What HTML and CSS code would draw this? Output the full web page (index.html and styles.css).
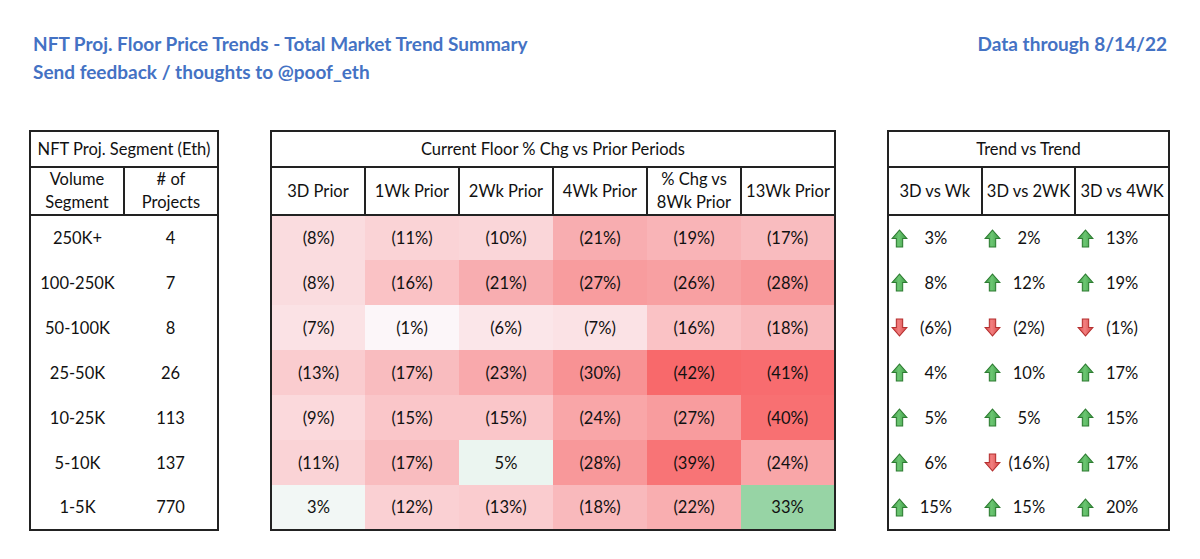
FILE: index.html
```html
<!DOCTYPE html>
<html lang="en">
<head>
<meta charset="utf-8">
<title>NFT Proj. Floor Price Trends</title>
<link rel="stylesheet" href="styles.css">
</head>
<body>
<div class="defs">
  <svg width="0" height="0" aria-hidden="true">
    <defs>
      <linearGradient id="gUp" x1="0" y1="0" x2="1" y2="0">
        <stop offset="0" stop-color="#3f9b47"/>
        <stop offset="0.45" stop-color="#6cc672"/>
        <stop offset="1" stop-color="#3c9a45"/>
      </linearGradient>
      <linearGradient id="gDn" x1="0" y1="0" x2="1" y2="0">
        <stop offset="0" stop-color="#d94a4a"/>
        <stop offset="0.45" stop-color="#f27f7f"/>
        <stop offset="1" stop-color="#d54545"/>
      </linearGradient>
    </defs>
  </svg>
</div>
<div class="page">
  <header class="top">
    <div class="titles">
      <div>NFT Proj. Floor Price Trends - Total Market Trend Summary</div>
      <div>Send feedback / thoughts to @poof_eth</div>
    </div>
    <div class="date">Data through 8/14/22</div>
  </header>

  <main class="tables">
    <table class="t t-seg">
      <colgroup><col class="c95"><col class="c95"></colgroup>
      <thead>
        <tr class="h1"><th colspan="2">NFT Proj. Segment (Eth)</th></tr>
        <tr class="h2"><th>Volume<br>Segment</th><th># of<br>Projects</th></tr>
      </thead>
      <tbody>
        <tr><td>250K+</td><td>4</td></tr>
        <tr><td>100-250K</td><td>7</td></tr>
        <tr><td>50-100K</td><td>8</td></tr>
        <tr><td>25-50K</td><td>26</td></tr>
        <tr><td>10-25K</td><td>113</td></tr>
        <tr><td>5-10K</td><td>137</td></tr>
        <tr><td>1-5K</td><td>770</td></tr>
      </tbody>
    </table>

    <table class="t t-chg">
      <thead>
        <tr class="h1"><th colspan="6">Current Floor % Chg vs Prior Periods</th></tr>
        <tr class="h2"><th>3D Prior</th><th>1Wk Prior</th><th>2Wk Prior</th><th>4Wk Prior</th><th>% Chg vs<br>8Wk Prior</th><th>13Wk Prior</th></tr>
      </thead>
      <tbody>
        <tr>
          <td style="background:#FADCDF">(8%)</td><td style="background:#FAD3D6">(11%)</td><td style="background:#FAD6D9">(10%)</td><td style="background:#F8ADB0">(21%)</td><td style="background:#F9B4B7">(19%)</td><td style="background:#F9BCBF">(17%)</td>
        </tr>
        <tr>
          <td style="background:#FADCDF">(8%)</td><td style="background:#FAC2C5">(16%)</td><td style="background:#F8ADB0">(21%)</td><td style="background:#F89C9E">(27%)</td><td style="background:#F8A0A2">(26%)</td><td style="background:#F8989A">(28%)</td>
        </tr>
        <tr>
          <td style="background:#FBE2E5">(7%)</td><td style="background:#FCF6F9">(1%)</td><td style="background:#FBE6E9">(6%)</td><td style="background:#FBE2E5">(7%)</td><td style="background:#FAC2C5">(16%)</td><td style="background:#F9B9BC">(18%)</td>
        </tr>
        <tr>
          <td style="background:#FACCCF">(13%)</td><td style="background:#F9BCBF">(17%)</td><td style="background:#F9A9AC">(23%)</td><td style="background:#F89294">(30%)</td><td style="background:#F8696B">(42%)</td><td style="background:#F86C6F">(41%)</td>
        </tr>
        <tr>
          <td style="background:#FBD9DC">(9%)</td><td style="background:#FAC6C9">(15%)</td><td style="background:#FAC6C9">(15%)</td><td style="background:#F9A6A8">(24%)</td><td style="background:#F89C9E">(27%)</td><td style="background:#F87072">(40%)</td>
        </tr>
        <tr>
          <td style="background:#FAD3D6">(11%)</td><td style="background:#F9BCBF">(17%)</td><td style="background:#EBF5F0">5%</td><td style="background:#F8989A">(28%)</td><td style="background:#F87476">(39%)</td><td style="background:#F9A6A8">(24%)</td>
        </tr>
        <tr>
          <td style="background:#F2F7F5">3%</td><td style="background:#FAD0D3">(12%)</td><td style="background:#FACCCF">(13%)</td><td style="background:#F9B9BC">(18%)</td><td style="background:#F9AEB0">(22%)</td><td style="background:#97D4A5">33%</td>
        </tr>
      </tbody>
    </table>

    <table class="t t-trend">
      <thead>
        <tr class="h1"><th colspan="3">Trend vs Trend</th></tr>
        <tr class="h2"><th>3D vs Wk</th><th>3D vs 2WK</th><th>3D vs 4WK</th></tr>
      </thead>
      <tbody>
        <tr>
          <td><div class="tv"><svg class="ar" viewBox="0 0 16 18"><path class="up" d="M8 1 L15 9 L11 9 L11 17 L5 17 L5 9 L1 9 Z"/></svg><span>3%</span></div></td>
          <td><div class="tv"><svg class="ar" viewBox="0 0 16 18"><path class="up" d="M8 1 L15 9 L11 9 L11 17 L5 17 L5 9 L1 9 Z"/></svg><span>2%</span></div></td>
          <td><div class="tv"><svg class="ar" viewBox="0 0 16 18"><path class="up" d="M8 1 L15 9 L11 9 L11 17 L5 17 L5 9 L1 9 Z"/></svg><span>13%</span></div></td>
        </tr>
        <tr>
          <td><div class="tv"><svg class="ar" viewBox="0 0 16 18"><path class="up" d="M8 1 L15 9 L11 9 L11 17 L5 17 L5 9 L1 9 Z"/></svg><span>8%</span></div></td>
          <td><div class="tv"><svg class="ar" viewBox="0 0 16 18"><path class="up" d="M8 1 L15 9 L11 9 L11 17 L5 17 L5 9 L1 9 Z"/></svg><span>12%</span></div></td>
          <td><div class="tv"><svg class="ar" viewBox="0 0 16 18"><path class="up" d="M8 1 L15 9 L11 9 L11 17 L5 17 L5 9 L1 9 Z"/></svg><span>19%</span></div></td>
        </tr>
        <tr>
          <td><div class="tv"><svg class="ar" viewBox="0 0 16 18"><path class="dn" d="M5 1 L11 1 L11 9 L15 9 L8 17 L1 9 L5 9 Z"/></svg><span>(6%)</span></div></td>
          <td><div class="tv"><svg class="ar" viewBox="0 0 16 18"><path class="dn" d="M5 1 L11 1 L11 9 L15 9 L8 17 L1 9 L5 9 Z"/></svg><span>(2%)</span></div></td>
          <td><div class="tv"><svg class="ar" viewBox="0 0 16 18"><path class="dn" d="M5 1 L11 1 L11 9 L15 9 L8 17 L1 9 L5 9 Z"/></svg><span>(1%)</span></div></td>
        </tr>
        <tr>
          <td><div class="tv"><svg class="ar" viewBox="0 0 16 18"><path class="up" d="M8 1 L15 9 L11 9 L11 17 L5 17 L5 9 L1 9 Z"/></svg><span>4%</span></div></td>
          <td><div class="tv"><svg class="ar" viewBox="0 0 16 18"><path class="up" d="M8 1 L15 9 L11 9 L11 17 L5 17 L5 9 L1 9 Z"/></svg><span>10%</span></div></td>
          <td><div class="tv"><svg class="ar" viewBox="0 0 16 18"><path class="up" d="M8 1 L15 9 L11 9 L11 17 L5 17 L5 9 L1 9 Z"/></svg><span>17%</span></div></td>
        </tr>
        <tr>
          <td><div class="tv"><svg class="ar" viewBox="0 0 16 18"><path class="up" d="M8 1 L15 9 L11 9 L11 17 L5 17 L5 9 L1 9 Z"/></svg><span>5%</span></div></td>
          <td><div class="tv"><svg class="ar" viewBox="0 0 16 18"><path class="up" d="M8 1 L15 9 L11 9 L11 17 L5 17 L5 9 L1 9 Z"/></svg><span>5%</span></div></td>
          <td><div class="tv"><svg class="ar" viewBox="0 0 16 18"><path class="up" d="M8 1 L15 9 L11 9 L11 17 L5 17 L5 9 L1 9 Z"/></svg><span>15%</span></div></td>
        </tr>
        <tr>
          <td><div class="tv"><svg class="ar" viewBox="0 0 16 18"><path class="up" d="M8 1 L15 9 L11 9 L11 17 L5 17 L5 9 L1 9 Z"/></svg><span>6%</span></div></td>
          <td><div class="tv"><svg class="ar" viewBox="0 0 16 18"><path class="dn" d="M5 1 L11 1 L11 9 L15 9 L8 17 L1 9 L5 9 Z"/></svg><span>(16%)</span></div></td>
          <td><div class="tv"><svg class="ar" viewBox="0 0 16 18"><path class="up" d="M8 1 L15 9 L11 9 L11 17 L5 17 L5 9 L1 9 Z"/></svg><span>17%</span></div></td>
        </tr>
        <tr>
          <td><div class="tv"><svg class="ar" viewBox="0 0 16 18"><path class="up" d="M8 1 L15 9 L11 9 L11 17 L5 17 L5 9 L1 9 Z"/></svg><span>15%</span></div></td>
          <td><div class="tv"><svg class="ar" viewBox="0 0 16 18"><path class="up" d="M8 1 L15 9 L11 9 L11 17 L5 17 L5 9 L1 9 Z"/></svg><span>15%</span></div></td>
          <td><div class="tv"><svg class="ar" viewBox="0 0 16 18"><path class="up" d="M8 1 L15 9 L11 9 L11 17 L5 17 L5 9 L1 9 Z"/></svg><span>20%</span></div></td>
        </tr>
      </tbody>
    </table>
  </main>
</div>
</body>
</html>
```

FILE: styles.css
```css
* { box-sizing: border-box; }

html, body {
  margin: 0;
  padding: 0;
  background: #ffffff;
}

body {
  font-family: Lato, "Liberation Sans", sans-serif;
  color: #111111;
}

.defs {
  height: 0;
  overflow: hidden;
}

.page {
  width: 1200px;
  height: 559px;
}

.top {
  display: flex;
  justify-content: space-between;
  padding: 30px 33px 0 33px;
  color: #4472C4;
  font-weight: 700;
  font-size: 19px;
  line-height: 28px;
}

.tables {
  display: flex;
  align-items: flex-start;
  gap: 51px;
  padding: 44px 0 0 29px;
}

.t {
  border-collapse: collapse;
  table-layout: fixed;
  border: 2px solid #222222;
  font-size: 16.5px;
}

.t-seg { width: 190px; }
.t-chg { width: 566px; }
.t-trend { width: 283px; }

.t th {
  font-weight: 400;
  border: 2px solid #222222;
  padding: 0;
  text-align: center;
  vertical-align: middle;
  line-height: 20px;
}

.t .h1 th { height: 36px; }
.t .h2 th { height: 48px; line-height: 23px; }

.t td {
  padding: 0;
  height: 45px;
  text-align: center;
  vertical-align: middle;
  line-height: 20px;
}

.tv {
  display: grid;
  grid-template-columns: 17px 1fr 17px;
  align-items: center;
  padding: 0 1px 0 2px;
}

.tv span {
  grid-column: 2;
  text-align: center;
}

.ar {
  width: 17px;
  height: 19px;
  display: block;
}

.ar .up {
  fill: url(#gUp);
  stroke: #2e7d32;
  stroke-width: 1;
  stroke-linejoin: miter;
}

.ar .dn {
  fill: url(#gDn);
  stroke: #b53030;
  stroke-width: 1;
  stroke-linejoin: miter;
}
```
